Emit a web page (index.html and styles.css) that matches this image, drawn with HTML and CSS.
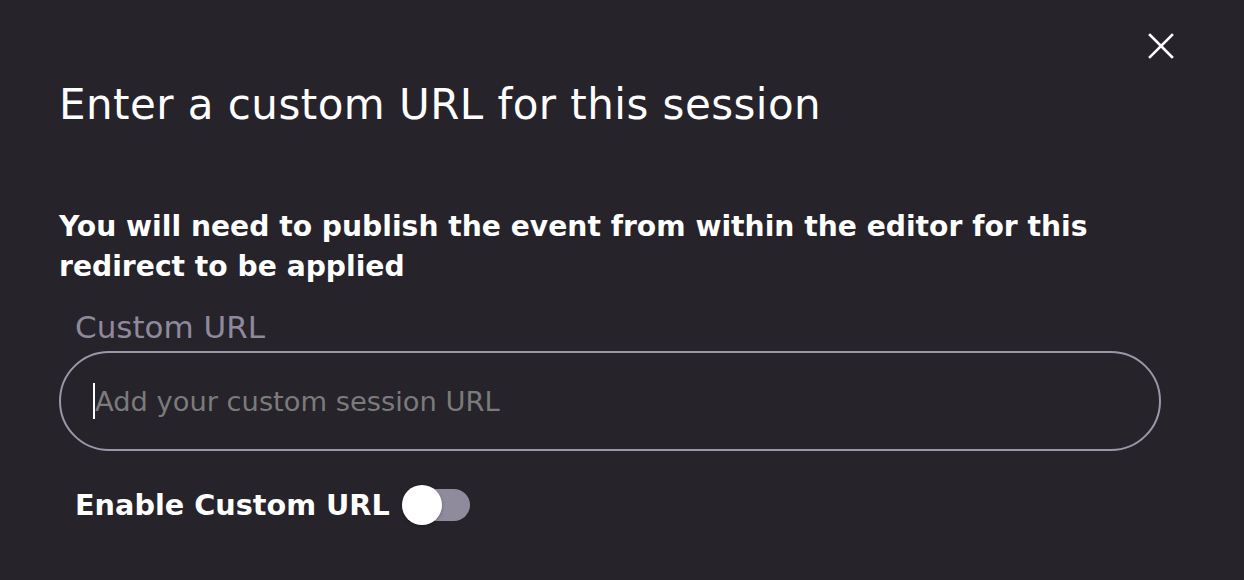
FILE: index.html
```html
<!DOCTYPE html>
<html>
<head>
<meta charset="utf-8">
<link rel="stylesheet" href="styles.css">
</head>
<body>
<div class="dialog">
  <button class="close" aria-label="Close">
    <svg width="26" height="26" viewBox="0 0 26 26"><path d="M2 2 L24 24 M24 2 L2 24" stroke="#ffffff" stroke-width="2.6" stroke-linecap="square" fill="none"/></svg>
  </button>
  <h1 class="title">Enter a custom URL for this session</h1>
  <p class="note">You will need to publish the event from within the editor for this redirect to be applied</p>
  <label class="label">Custom URL</label>
  <div class="input">
    <span class="caret"></span>
    <span class="placeholder">Add your custom session URL</span>
  </div>
  <div class="toggle-row">
    <span class="toggle-label">Enable Custom URL</span>
    <span class="switch"><span class="thumb"></span></span>
  </div>
</div>
</body>
</html>
```
FILE: styles.css
```css
html, body {
  margin: 0;
  padding: 0;
  background: #26232b;
  width: 1244px;
  height: 580px;
  overflow: hidden;
}
.dialog {
  position: relative;
  box-sizing: border-box;
  width: 1244px;
  height: 580px;
  padding: 77px 83px 0 59px;
  font-family: "DejaVu Sans", sans-serif;
  color: #ffffff;
}
.close {
  position: absolute;
  top: 33px;
  left: 1148px;
  width: 26px;
  height: 26px;
  padding: 0;
  border: 0;
  background: none;
}
.close svg { display: block; }
.title {
  margin: 0;
  font-size: 42px;
  font-weight: 400;
  line-height: 56px;
  letter-spacing: 0.45px;
}
.note {
  margin: 74px 0 0 0;
  font-size: 28.2px;
  font-weight: 700;
  line-height: 40px;
}
.label {
  display: block;
  margin: 20px 0 0 16px;
  font-size: 31px;
  line-height: 40px;
  color: #8e8a9b;
}
.input {
  box-sizing: border-box;
  margin-top: 4px;
  height: 100px;
  width: 1102px;
  border: 2px solid #9b97a8;
  border-radius: 50px;
  display: flex;
  align-items: center;
  padding-left: 32px;
}
.caret {
  width: 2px;
  height: 36px;
  background: #ffffff;
}
.placeholder {
  font-size: 27.3px;
  color: #7b7b7b;
}
.toggle-row {
  display: flex;
  align-items: center;
  margin: 34px 0 0 16px;
  gap: 12px;
}
.toggle-label {
  font-size: 28.7px;
  font-weight: 700;
  line-height: 40px;
}
.switch {
  position: relative;
  width: 66px;
  height: 32px;
  border-radius: 16px;
  background: #8f8b9c;
  margin-left: 2px;
}
.thumb {
  position: absolute;
  left: -2px;
  top: -4px;
  width: 40px;
  height: 40px;
  border-radius: 50%;
  background: #ffffff;
  box-shadow: 0 1px 3px rgba(0,0,0,0.3);
}
```
